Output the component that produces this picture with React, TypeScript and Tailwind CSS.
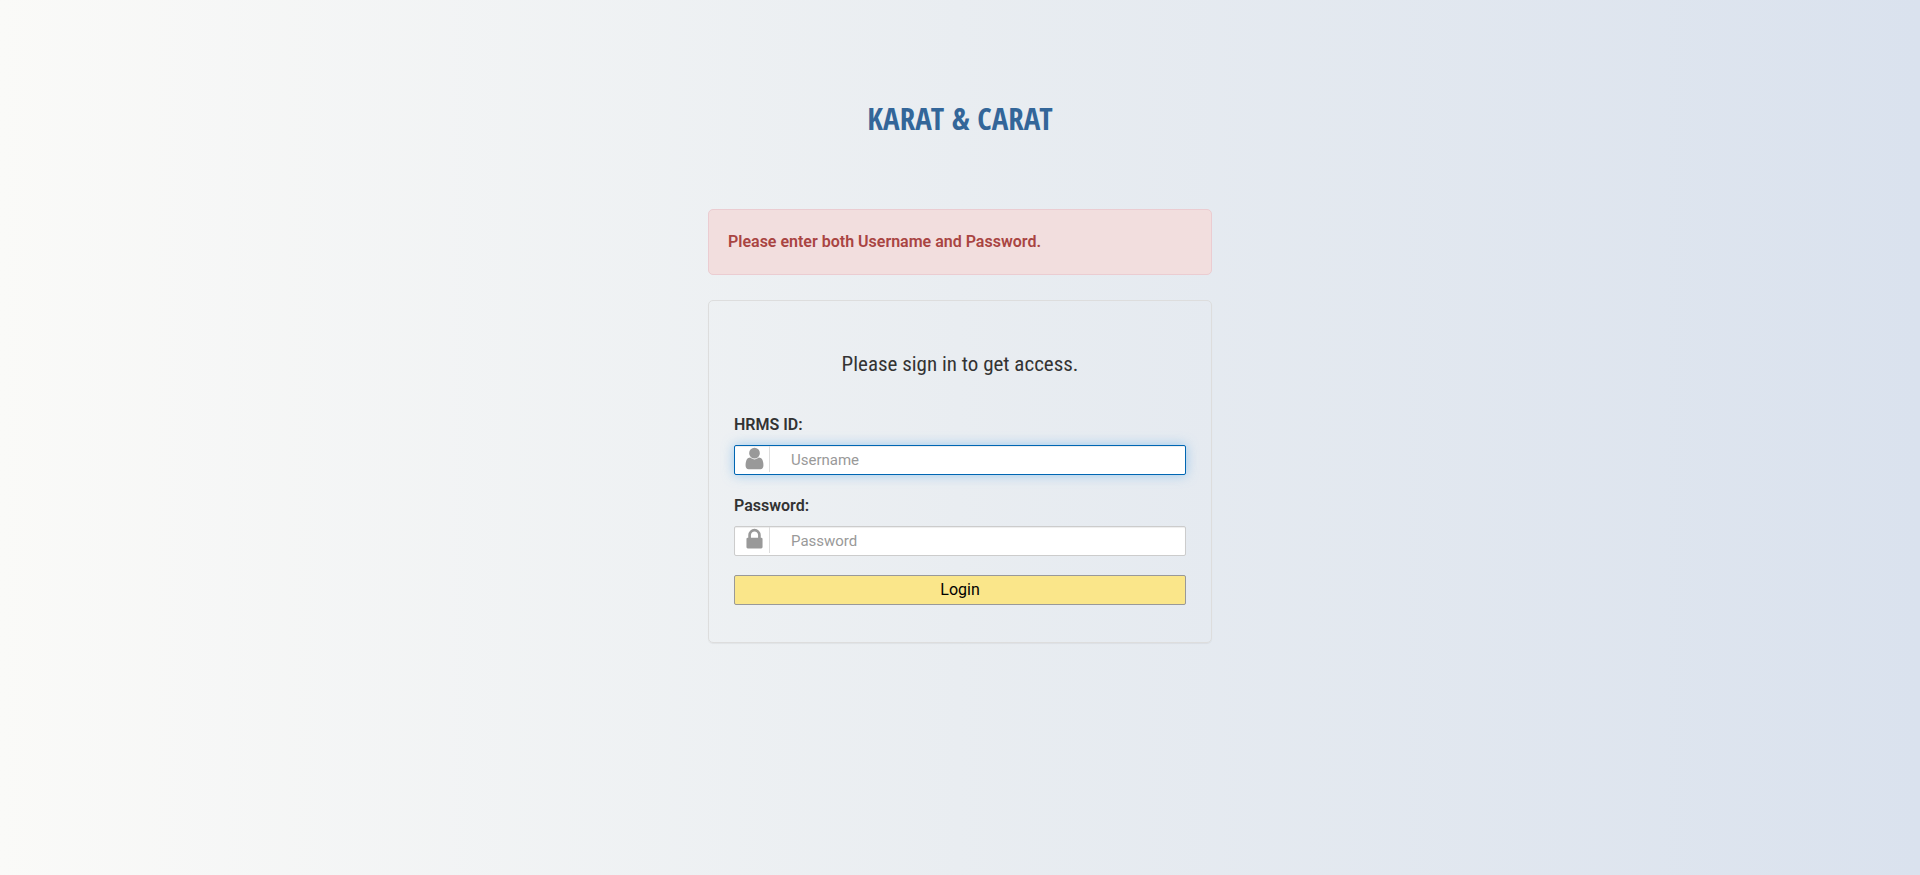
import type { ReactNode } from 'react';

function UserIcon() {
  return (
    <svg viewBox="0 0 1792 1792" className="size-[25px] fill-[#999]" aria-hidden="true">
      <path d="M1536 1399q0 109-62.5 187t-150.5 78h-854q-88 0-150.5-78t-62.5-187q0-85 8.5-160.5t31.5-152 58.5-131 94-89 134.5-34.5q131 128 313 128t313-128q76 0 134.5 34.5t94 89 58.5 131 31.5 152 8.5 160.5zm-256-887q0 159-112.5 271.5t-271.5 112.5-271.5-112.5-112.5-271.5 112.5-271.5 271.5-112.5 271.5 112.5 112.5 271.5z" />
    </svg>
  );
}

function LockIcon() {
  return (
    <svg viewBox="0 0 1792 1792" className="size-[25px] fill-[#999]" aria-hidden="true">
      <path d="M640 768h512v-192q0-106-75-181t-181-75-181 75-75 181v192zm832 96v576q0 40-28 68t-68 28h-960q-40 0-68-28t-28-68v-576q0-40 28-68t68-28h32v-192q0-184 132-316t316-132 316 132 132 316v192h32q40 0 68 28t28 68z" />
    </svg>
  );
}

type FieldProps = {
  id: string;
  label: string;
  type: string;
  placeholder: string;
  icon: ReactNode;
  autoFocus?: boolean;
};

function Field({ id, label, type, placeholder, icon, autoFocus }: FieldProps) {
  return (
    <div className="flex flex-col gap-2">
      <label htmlFor={id} className="text-base leading-6 font-semibold text-[#333]">
        {label}
      </label>
      <div className="flex h-[30px] items-start rounded-xs border border-[#ccc] bg-white shadow-[inset_0_1px_1px_rgba(0,0,0,0.075)] focus-within:border-[#0066b3] focus-within:shadow-[inset_0_1px_1px_rgba(0,0,0,0.075),0_0_12px_rgba(102,175,233,0.6)]">
        <span className="flex h-[26px] w-[35px] shrink-0 items-start justify-center border-r border-[#ddd] pl-[4px]">
          {icon}
        </span>
        <input
          id={id}
          type={type}
          placeholder={placeholder}
          autoFocus={autoFocus}
          className="h-7 w-full min-w-0 bg-transparent pr-3 pl-[21px] text-[15px] text-[#555] outline-none placeholder:text-[#999]"
        />
      </div>
    </div>
  );
}

export default function App() {
  return (
    <main className="flex min-h-screen flex-col items-center bg-linear-to-r from-[#fafaf8] via-[#e9edf1] to-[#dae2ee] px-4 pt-24 font-[Roboto,sans-serif]">
      <h1 className="font-['Open_Sans_Condensed','Open_Sans',sans-serif] text-[31px] leading-[44px] font-bold text-[#336699]">
        KARAT &amp; CARAT
      </h1>

      <div
        role="alert"
        className="mt-[69px] w-full max-w-[504px] rounded-[5px] border border-[#ebccd1] bg-[#f2dede] px-[19px] py-5 text-base leading-6 font-semibold text-[#a94442]"
      >
        Please enter both Username and Password.
      </div>

      <form
        onSubmit={(event) => event.preventDefault()}
        className="mt-[25px] w-full max-w-[504px] rounded-[5px] border border-[#ddd] px-[25px] pt-[47px] pb-[37px] shadow-[0_1px_1px_rgba(0,0,0,0.05)]"
      >
        <h2 className="text-center font-['Roboto_Condensed',Roboto,sans-serif] text-[21px] leading-8 font-normal text-[#333]">
          Please sign in to get access.
        </h2>
        <div className="mt-[33px] flex flex-col gap-[19px]">
          <Field id="username" label="HRMS ID:" type="text" placeholder="Username" icon={<UserIcon />} autoFocus />
          <Field id="password" label="Password:" type="password" placeholder="Password" icon={<LockIcon />} />
          <button
            type="submit"
            className="flex h-[30px] w-full items-center justify-center rounded-xs border border-[#999] bg-[#fae68a] text-base text-black"
          >
            Login
          </button>
        </div>
      </form>
    </main>
  );
}
